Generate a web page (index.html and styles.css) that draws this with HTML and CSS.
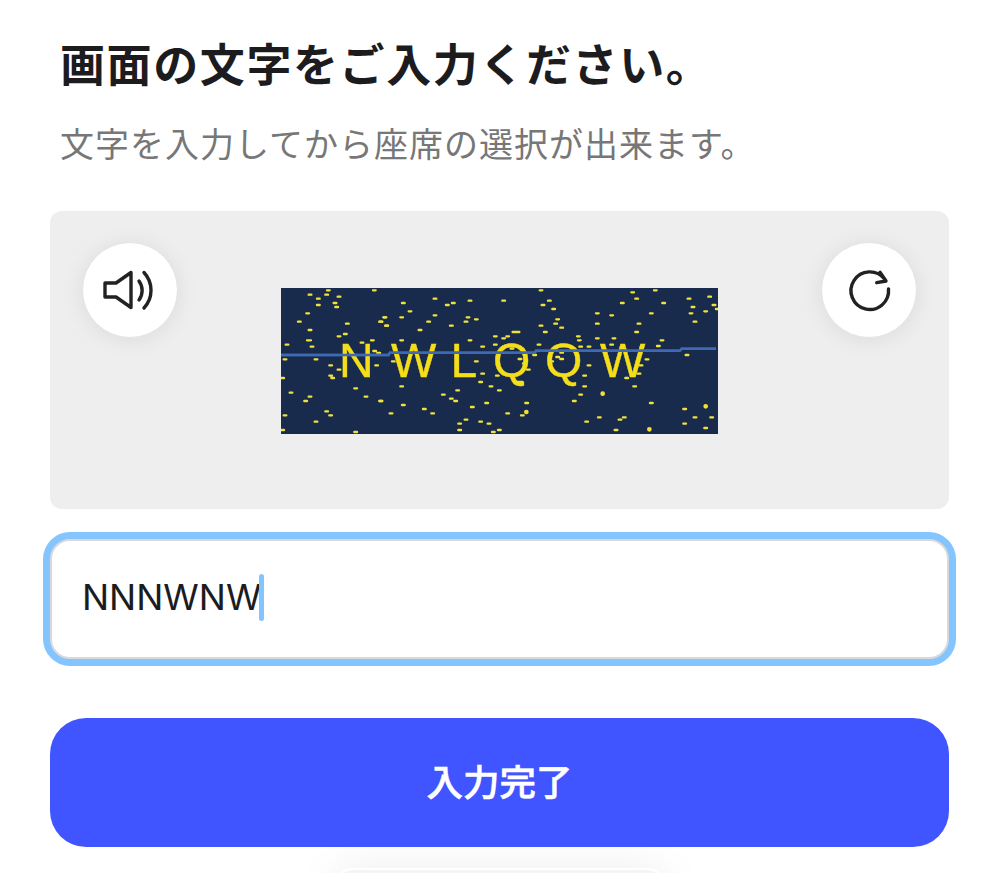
FILE: index.html
```html
<!DOCTYPE html>
<html lang="ja">
<head>
<meta charset="utf-8">
<title>画面の文字をご入力ください。</title>
<link rel="stylesheet" href="styles.css">
</head>
<body>
<main class="page">
  <h1 class="title">画面の文字をご入力ください。</h1>
  <p class="subtitle">文字を入力してから座席の選択が出来ます。</p>
  <section class="panel">
    <button class="round" type="button" aria-label="音声">
      <svg class="icon" viewBox="0 0 56 56"><path d="M29 10.500 14 21H3v14h11l15 10.500zM37 19A16 16 0 0 1 37 38M42 10.500A26 26 0 0 1 42 46"/></svg>
    </button>
    <svg class="captcha" viewBox="0 0 437 146" role="img" aria-label="captcha">
      <rect class="cap-bg" width="437" height="146"/>
      <g transform="translate(-231 -78) scale(.33333)">
        <path class="dots" d="M776 254h8M831 241h8M826 254h8M801 266h8M863 260h8M801 285h8M851 279h8M856 291h8M969 241h8M769 310h8M744 335h8M888 341h8M1001 322h8M988 335h8M1006 347h8M776 360h8M863 379h8M882 372h8M771 391h12M782 410h8M707 404h8M932 398h8M963 391h8M970 423h8M982 429h8M701 448h8M794 448h8M838 466h8M863 479h8M976 466h8M838 497h8M844 504h8M694 504h8M913 535h8M719 548h8M776 560h8M763 573h8M944 560h8M988 573h8M826 604h8M838 616h8M701 616h8M794 635h8M694 660h8M913 666h8"/>
        <path class="line" d="M693 435H1020"/>
      </g>
      <g transform="translate(99 -78) scale(.33333)">
        <path class="dots" d="M66 279h8M161 266h8M198 285h8M216 279h8M266 272h8M367 272h8M86 304h8M161 316h8M10 322h8M61 322h8M-1 335h8M16 347h8M142 335h8M260 322h8M254 335h8M285 328h8M210 347h8M116 360h8M61 391h8M266 391h8M342 379h8M379 379h8M367 385h8M398 366h20M342 404h8M304 410h8M392 416h8M36 454h8M285 454h8M460 435h8M473 404h8M479 347h8M492 366h8M479 241h8M504 272h8M485 285h8M517 297h8M529 328h8M523 341h8M541 353h8M591 379h8M594 391h8M598 410h8M623 410h8M648 385h8M648 341h8M648 310h8M691 316h8M698 385h8M691 404h8M723 279h8M754 247h8M766 266h8M822 241h8M847 279h8M810 310h8M773 341h8M766 366h8M842 391h8M831 408h8M797 448h8M779 466h8M773 491h8M736 504h8M760 529h8M623 466h8M610 497h8M610 529h8M598 554h8M579 573h8M810 579h8M910 597h8M941 622h8M991 622h8M910 641h8M973 654h8M729 622h8M716 629h8M654 622h8M616 635h8M704 660h8M923 266h8M985 260h8M935 291h8M998 285h8M929 310h8M973 304h8M941 335h8M1008 297h8M917 435h8M61 529h8M186 554h8M210 566h8M223 573h8M229 541h8M298 516h8M329 529h8M354 541h8M304 491h8M348 497h8M441 479h8M412 516h16M-1 573h8M66 585h8M129 597h8M154 610h8M29 610h8M273 591h8M316 579h8M379 610h8M436 579h8M423 616h8M254 629h8M235 641h8M298 635h8M323 641h8M235 660h8M354 660h8M336 666h8M541 428h8M541 447h8M529 441h8M511 454h8M416 447h8M429 460h8"/>
        <path class="dots-big" d="M668 551h.1M977 589h.1M439 606h.1M808 658h.1"/>
      </g>
      <text class="cap-text" x="58 110 169.500 212 264 319" y="89">NWLQQW</text>
      <g transform="translate(99 -78) scale(.33333)">
        <path class="line" d="M-560 435H25L30 428H465L468 422H900L905 416H1008"/>
      </g>
    </svg>
    <button class="round" type="button" aria-label="更新">
      <svg class="icon" viewBox="0 0 56 56"><path d="M47.500 27A18.800 18.800 0 1 1 43.500 17M39 10.300 45 19 35.700 20.700"/></svg>
    </button>
  </section>
  <div class="field"><span class="value">NNNWNW</span><span class="caret"></span></div>
  <button class="submit" type="button">入力完了</button>
  <div class="peek-clip"><div class="peek"></div></div>
</main>
</body>
</html>
```
FILE: styles.css
```css
* { box-sizing: border-box; }
html, body { margin: 0; height: 873px; overflow: hidden; background: #fff; }
body { font-family: Inter, "Noto Sans CJK JP", sans-serif; color: #1c1c1e; }
.page { height: 873px; padding: 33px 50px 0; display: flex; flex-direction: column; }
.title {
  margin: 0 0 0 10px;
  font: 700 45px/60px "Noto Sans CJK JP", sans-serif;
  letter-spacing: 1.6px;
  white-space: nowrap;
}
.subtitle {
  margin: 26px 0 0 10px;
  font: 400 34px/48px "Noto Sans CJK JP", sans-serif;
  letter-spacing: 1px;
  color: #777;
  white-space: nowrap;
}
.panel {
  margin-top: 44px;
  height: 298px;
  padding: 31px 32px;
  background: #eeeeef;
  border-radius: 12px;
  display: flex;
  justify-content: space-between;
  align-items: flex-start;
}
.round {
  width: 96px;
  height: 96px;
  padding: 0;
  border: 1px solid #e4e4e7;
  border-radius: 50%;
  background: #fff;
  box-shadow: 0 2px 22px rgba(0, 0, 0, .08);
  display: flex;
  align-items: center;
  justify-content: center;
}
.icon { width: 56px; height: 56px; fill: none; stroke: #222; stroke-width: 3.4; stroke-linecap: round; stroke-linejoin: round; }
.captcha { width: 437px; height: 146px; margin-top: 46px; filter: blur(.4px); }
.cap-bg { fill: #192b4c; }
.dots { fill: none; stroke: #f0e23c; stroke-width: 7; stroke-linecap: round; }
.dots-big { fill: none; stroke: #f0e230; stroke-width: 14; stroke-linecap: round; }
.line { fill: none; stroke: #3f68b5; stroke-width: 8; }
.cap-text { font: 400 48px "Liberation Sans", sans-serif; fill: #f4de1a; stroke: #f4de1a; stroke-width: .4px; }
.field {
  margin-top: 30px;
  height: 120px;
  padding: 0 0 4px 30px;
  background: #fff;
  border: 2px solid #d9d9dc;
  border-radius: 20px;
  box-shadow: 0 0 0 7px #84c4ff;
  display: flex;
  align-items: center;
  font-size: 36px;
}
.caret { width: 5px; height: 47px; margin-left: -2px; background: #84c4ff; border-radius: 3px; }
.submit {
  margin-top: 59px;
  height: 129px;
  padding: 0 0 5px;
  border: 0;
  border-radius: 36px;
  background: #4055ff;
  color: #fff;
  font: 500 36.500px "Noto Sans CJK JP", sans-serif;
  -webkit-text-stroke: .6px #fff;
}
.peek-clip {
  flex: 1;
  margin: 0 -50px;
  padding-top: 21px;
  overflow: hidden;
  display: flex;
  justify-content: center;
}
.peek {
  flex: none;
  width: 340px;
  height: 60px;
  background: #f4f4f4;
  border: 2px solid #fff;
  border-radius: 24px;
  box-shadow: 0 0 40px rgba(0, 0, 0, .07);
}
```
